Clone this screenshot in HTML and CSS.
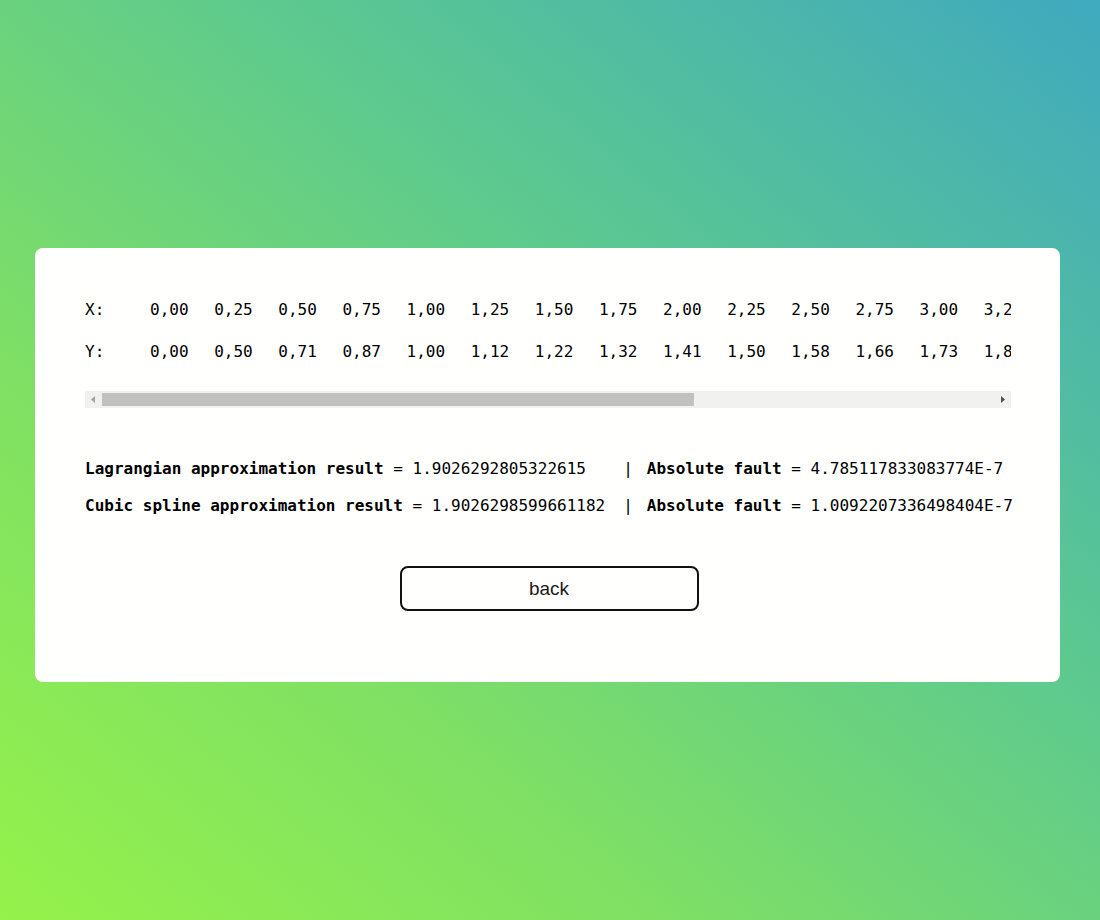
FILE: index.html
```html
<!DOCTYPE html>
<html lang="en">
<head>
<meta charset="utf-8">
<title>Approximation result</title>
<link rel="stylesheet" href="styles.css">
</head>
<body>
<main class="card">
  <div class="data">
    <table class="points">
      <tr>
        <th>X:</th>
        <td>0,00</td><td>0,25</td><td>0,50</td><td>0,75</td><td>1,00</td><td>1,25</td><td>1,50</td><td>1,75</td><td>2,00</td><td>2,25</td><td>2,50</td><td>2,75</td><td>3,00</td><td>3,25</td><td>3,50</td><td>3,75</td><td>4,00</td><td>4,25</td><td>4,50</td><td>4,75</td><td>5,00</td>
      </tr>
      <tr>
        <th>Y:</th>
        <td>0,00</td><td>0,50</td><td>0,71</td><td>0,87</td><td>1,00</td><td>1,12</td><td>1,22</td><td>1,32</td><td>1,41</td><td>1,50</td><td>1,58</td><td>1,66</td><td>1,73</td><td>1,80</td><td>1,87</td><td>1,94</td><td>2,00</td><td>2,06</td><td>2,12</td><td>2,18</td><td>2,24</td>
      </tr>
    </table>
  </div>

  <div class="scrollbar" aria-hidden="true">
    <div class="sb-btn">
      <svg width="17" height="17" viewBox="0 0 17 17"><polygon points="10,5 6,8.5 10,12" fill="#a3a3a3"/></svg>
    </div>
    <div class="sb-track"><div class="sb-thumb"></div></div>
    <div class="sb-btn">
      <svg width="17" height="17" viewBox="0 0 17 17"><polygon points="7,5 11,8.5 7,12" fill="#505050"/></svg>
    </div>
  </div>

  <div class="results">
    <div class="res"><b>Lagrangian approximation result</b> = 1.9026292805322615</div>
    <div class="sep">|</div>
    <div class="res"><b>Absolute fault</b> = 4.785117833083774E-7</div>

    <div class="res"><b>Cubic spline approximation result</b> = 1.9026298599661182</div>
    <div class="sep">|</div>
    <div class="res"><b>Absolute fault</b> = 1.0092207336498404E-7</div>
  </div>

  <div class="actions">
    <button class="back" type="button">back</button>
  </div>
</main>
</body>
</html>
```

FILE: styles.css
```css
html, body {
  margin: 0;
  padding: 0;
}

body {
  width: 1100px;
  height: 920px;
  overflow: hidden;
  background: linear-gradient(to top right, #95f24a 0%, #7fe064 30%, #5fcb8c 60%, #3fa9bf 100%);
  font-family: "DejaVu Sans Mono", "Liberation Mono", monospace;
  color: #000;
}

.card {
  box-sizing: border-box;
  width: 1025px;
  margin: 248px 0 0 35px;
  padding: 40px 49px 71px 50px;
  background: #fffffe;
  border-radius: 8px;
}

.data {
  overflow: hidden;
}

.points {
  border-collapse: collapse;
  font-size: 16px;
  white-space: nowrap;
}

.points th,
.points td {
  height: 42px;
  padding: 0;
  text-align: left;
  font-weight: 400;
}

.points th {
  width: 65px;
  min-width: 65px;
}

.points td {
  padding-right: 25.6px;
}

.scrollbar {
  display: flex;
  height: 17px;
  margin-top: 19px;
  background: #f1f1f1;
}

.sb-btn {
  flex: 0 0 17px;
  height: 17px;
}

.sb-btn svg {
  display: block;
}

.sb-track {
  flex: 1;
  display: flex;
  align-items: center;
}

.sb-thumb {
  width: 592px;
  height: 13px;
  background: #c1c1c1;
}

.results {
  display: grid;
  grid-template-columns: auto auto 1fr;
  justify-content: start;
  margin-top: 42px;
  font-size: 16px;
  line-height: 37px;
  white-space: pre;
}

.res b {
  font-weight: 700;
}

.sep {
  padding: 0 14px 0 18px;
}

.actions {
  display: flex;
  justify-content: center;
  margin-top: 42px;
}

.back {
  box-sizing: border-box;
  width: 299px;
  height: 45px;
  margin-left: 2px;
  background: #fffffe;
  border: 2px solid #111;
  border-radius: 8px;
  font-family: "Liberation Sans", Arial, sans-serif;
  font-size: 19px;
  color: #1a1a1a;
  cursor: pointer;
}
```
